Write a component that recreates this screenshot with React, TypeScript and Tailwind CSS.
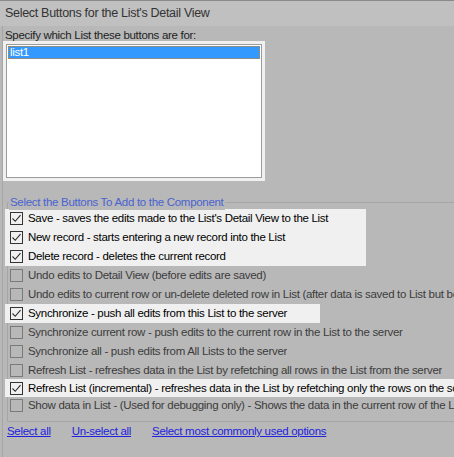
import React from "react";

type Row = { text: string; checked?: boolean; hl?: string; h: string };

const rows: Row[] = [
  { text: "Save - saves the edits made to the List's Detail View to the List", checked: true, hl: "w-[361px]", h: "h-[19px]" },
  { text: "New record - starts entering a new record into the List", checked: true, hl: "w-[361px]", h: "h-[19px]" },
  { text: "Delete record - deletes the current record", checked: true, hl: "w-[361px]", h: "h-[19px]" },
  { text: "Undo edits to Detail View (before edits are saved)", h: "h-[19px]" },
  { text: "Undo edits to current row or un-delete deleted row in List (after data is saved to List but before it is synchronized)", h: "h-[19px]" },
  { text: "Synchronize - push all edits from this List to the server", checked: true, hl: "w-[315px]", h: "h-[19px]" },
  { text: "Synchronize current row - push edits to the current row in the List to the server", h: "h-[19px]" },
  { text: "Synchronize all - push edits from All Lists to the server", h: "h-[19px]" },
  { text: "Refresh List - refreshes data in the List by refetching all rows in the List from the server", h: "h-[18px]" },
  { text: "Refresh List (incremental) - refreshes data in the List by refetching only the rows on the screen", checked: true, hl: "w-[460px]", h: "h-[18px]" },
  { text: "Show data in List - (Used for debugging only) - Shows the data in the current row of the List", h: "h-[17px]" },
];

function Box({ checked }: { checked?: boolean }) {
  return (
    <div
      className={
        "w-[13px] h-[13px] shrink-0 border flex items-center justify-center " +
        (checked ? "border-[#333333]" : "border-[#7a7a7a]")
      }
    >
      {checked && (
        <svg width="11" height="11" viewBox="0 0 11 11">
          <path d="M1.5 5.5 L4.2 8.3 L9.5 2.2" fill="none" stroke="#2a2a2a" strokeWidth="1.1" />
        </svg>
      )}
    </div>
  );
}

export default function App() {
  return (
    <div
      className="w-[454px] h-[457px] overflow-hidden bg-[#b8b8b8] text-[11.5px] tracking-[-0.3px]"
      style={{ fontFamily: "'Liberation Sans', Arial, sans-serif" }}
    >
      <div className="h-[26px] border-t border-[#8a8a8a] bg-[#c0c0c0] flex items-center pl-[5px] text-[12.5px] tracking-[-0.3px] text-[#333333]">
        Select Buttons for the List's Detail View
      </div>
      <div className="ml-[2px] border-l border-[#a6a6a6] h-[431px] flex flex-col">
        <div className="h-[15px] pl-[2px] pt-[2px] leading-[15px] text-[#1e1e1e]">Specify which List these buttons are for:</div>
        <div className="w-[262px] h-[140px] border-[3px] border-[#f0f0f0] bg-[#f0f0f0]">
          <div className="h-full border border-[#9c9c9c] bg-white p-[1px]">
            <div className="h-[13px] bg-[#3399ff] border border-dotted border-[#e0801a] text-white leading-[11px] pl-[1px]">
              list1
            </div>
          </div>
        </div>
        <div className="h-[21px]" />
        <div className="relative ml-[4px] h-[220px] border-l border-b border-[#a6a6a6]">
          <div className="absolute left-0 right-0 top-0 border-t border-[#a6a6a6]" />
          <div className="absolute left-[1px] -top-[7px] px-[1px] bg-[#b8b8b8] text-[#4a62d0] leading-[15px]">
            Select the Buttons To Add to the Component
          </div>
          <div className="pt-[7px] flex flex-col -ml-[3px]">
            {rows.map((r, i) => (
              <div key={i} className={"flex items-center " + r.h}>
                <div
                  className={
                    "h-full flex items-center gap-[5px] pl-[5px] whitespace-nowrap overflow-hidden shrink-0 " +
                    (r.hl ? "bg-[#f0f0f0] " + r.hl : "")
                  }
                >
                  <Box checked={r.checked} />
                  <span className={"pt-[1px] " + (r.checked ? "text-black" : "text-[#3c3c3c]")}>{r.text}</span>
                </div>
              </div>
            ))}
          </div>
        </div>
        <div className="flex items-center h-[20px] pl-[4px] gap-[21px] text-[#2222dd] underline">
          <span>Select all</span>
          <span>Un-select all</span>
          <span>Select most commonly used options</span>
        </div>
      </div>
    </div>
  );
}
